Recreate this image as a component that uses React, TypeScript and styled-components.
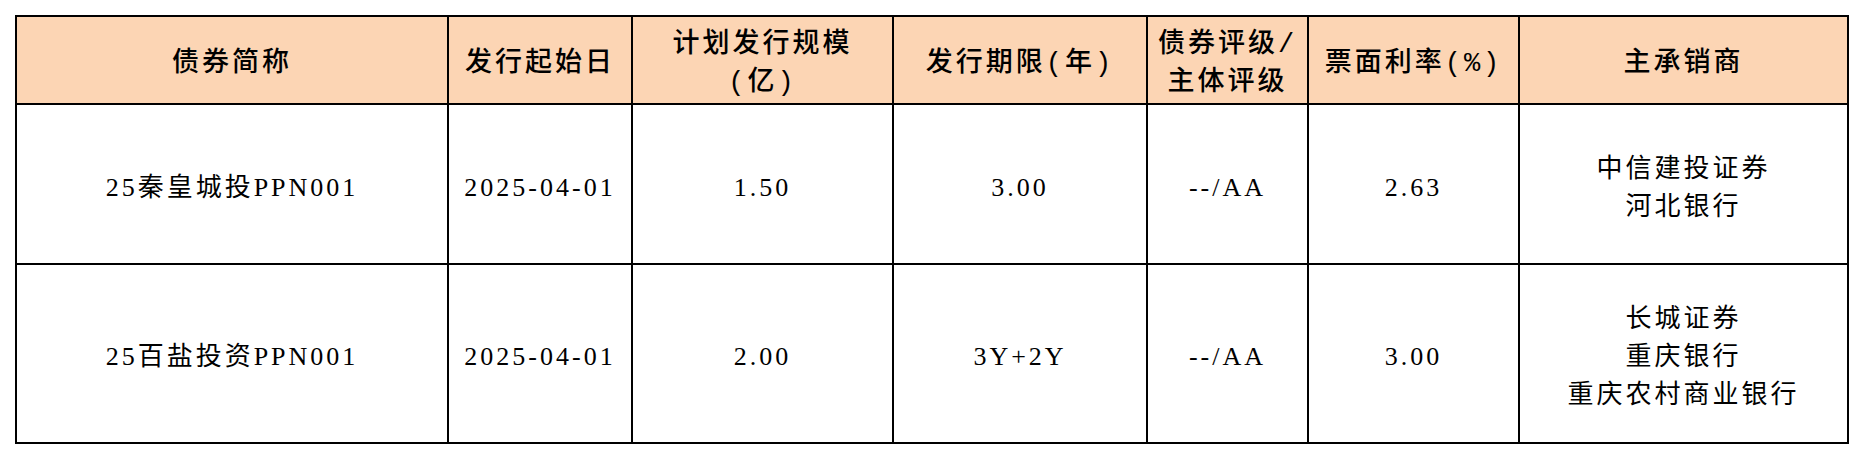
import React from "react";
import styled, { createGlobalStyle } from "styled-components";

const Global = createGlobalStyle`
  html, body { margin: 0; padding: 0; background: #ffffff; }
  body { font-family: "Liberation Serif", "Noto Sans CJK SC", serif; color: #000; }
`;

const Page = styled.div`
  padding: 15px;
  width: 1864px;
  height: 460px;
  box-sizing: border-box;
`;

const Grid = styled.div`
  display: grid;
  grid-template-columns: 430px 182px 259px 252px 159px 209px 327px;
  grid-template-rows: 86px 158px 177px;
  gap: 2px;
  padding: 2px;
  background: #000;
  width: 1834px;
  box-sizing: border-box;
`;

const Cell = styled.div<{ $head?: boolean }>`
  background: ${(p) => (p.$head ? "#FCD5B4" : "#ffffff")};
  display: flex;
  flex-direction: column;
  align-items: center;
  justify-content: center;
  text-align: center;
  box-sizing: border-box;
  padding-top: 7px;
  font-family: ${(p) =>
    p.$head
      ? `"Liberation Mono", "Noto Sans CJK SC", monospace`
      : `"Liberation Serif", "Noto Sans CJK SC", serif`};
  font-size: ${(p) => (p.$head ? "27px" : "26px")};
  font-weight: ${(p) => (p.$head ? 500 : 400)};
  letter-spacing: 3px;
  line-height: 38px;
  white-space: nowrap;
`;

const Line = styled.span`
  display: block;
`;

const headers: string[][] = [
  ["债券简称"],
  ["发行起始日"],
  ["计划发行规模", "(亿)"],
  ["发行期限(年)"],
  ["债券评级/", "主体评级"],
  ["票面利率(%)"],
  ["主承销商"],
];

const rows: string[][][] = [
  [["25秦皇城投PPN001"], ["2025-04-01"], ["1.50"], ["3.00"], ["--/AA"], ["2.63"], ["中信建投证券", "河北银行"]],
  [["25百盐投资PPN001"], ["2025-04-01"], ["2.00"], ["3Y+2Y"], ["--/AA"], ["3.00"], ["长城证券", "重庆银行", "重庆农村商业银行"]],
];

export default function App() {
  return (
    <Page>
      <Global />
      <Grid>
        {headers.map((h, i) => (
          <Cell $head key={"h" + i}>
            {h.map((t, j) => (
              <Line key={j}>{t}</Line>
            ))}
          </Cell>
        ))}
        {rows.map((r, ri) =>
          r.map((c, ci) => (
            <Cell key={ri + "-" + ci}>
              {c.map((t, j) => (
                <Line key={j}>{t}</Line>
              ))}
            </Cell>
          ))
        )}
      </Grid>
    </Page>
  );
}
